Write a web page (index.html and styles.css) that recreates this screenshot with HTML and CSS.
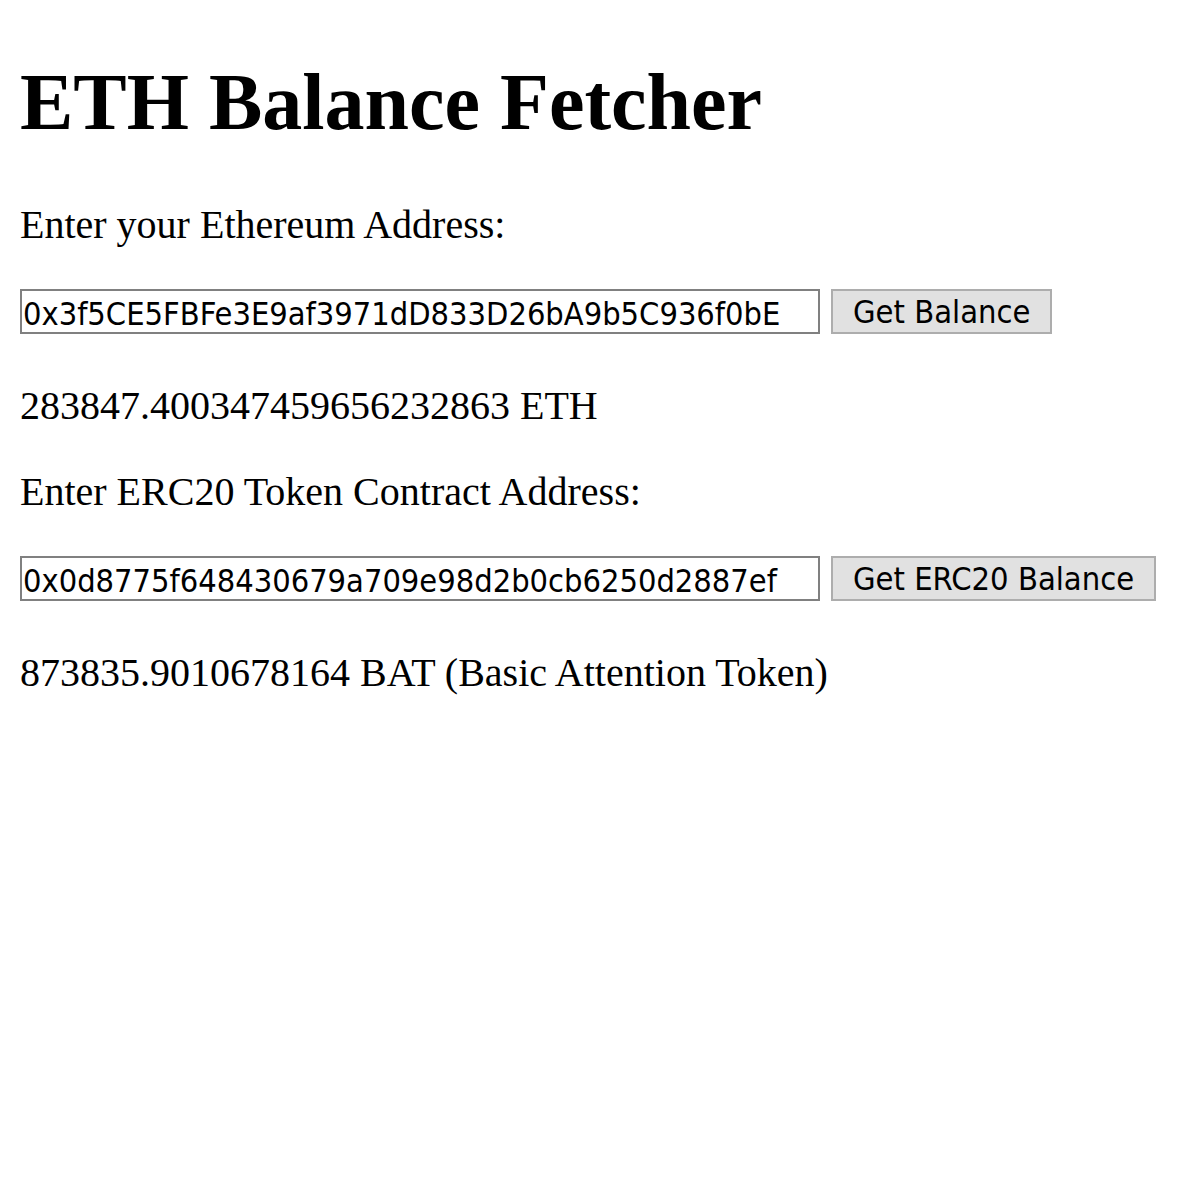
FILE: index.html
```html
<!DOCTYPE html>
<html>
<head>
<meta charset="utf-8">
<title>ETH Balance Fetcher</title>
<link rel="stylesheet" href="styles.css">
</head>
<body>
<h1 class="title">ETH Balance Fetcher</h1>
<p class="label">Enter your Ethereum Address:</p>
<div class="row">
  <input class="addr" type="text" value="0x3f5CE5FBFe3E9af3971dD833D26bA9b5C936f0bE">
  <button class="btn">Get Balance</button>
</div>
<p class="result">283847.400347459656232863 ETH</p>
<p class="label">Enter ERC20 Token Contract Address:</p>
<div class="row">
  <input class="addr" type="text" value="0x0d8775f648430679a709e98d2b0cb6250d2887ef">
  <button class="btn">Get ERC20 Balance</button>
</div>
<p class="result">873835.9010678164 BAT (Basic Attention Token)</p>
</body>
</html>
```
FILE: styles.css
```css
html, body {
  background: #ffffff;
}
body {
  margin: 0;
  padding: 20px;
  font-family: "Liberation Serif", "Times New Roman", serif;
  font-size: 40px;
  color: #000000;
}
.title {
  font-size: 80px;
  font-weight: bold;
  margin: 36px 0 53.6px 0;
  line-height: 92px;
}
.label {
  margin: 40px 0 0 0;
  line-height: 46px;
}
.result {
  margin: 0;
  line-height: 46px;
}
.row {
  display: flex;
  align-items: center;
  gap: 11px;
  margin: 41px 0 49px 0;
  height: 45px;
}
.addr {
  box-sizing: border-box;
  width: 800px;
  height: 45px;
  margin: 0;
  padding: 5px 0 0 1px;
  border: 2px solid #808080;
  background: #ffffff;
  font-family: "DejaVu Sans Condensed", "DejaVu Sans", sans-serif;
  font-size: 32.3px;
  color: #000000;
  outline: none;
}
.btn {
  box-sizing: border-box;
  height: 45px;
  margin: 0;
  padding: 1px 20px 0 20px;
  border: 2px solid #adadad;
  background: #e1e1e1;
  font-family: "DejaVu Sans Condensed", "DejaVu Sans", sans-serif;
  font-size: 32.4px;
  color: #000000;
  border-radius: 0;
}
```
